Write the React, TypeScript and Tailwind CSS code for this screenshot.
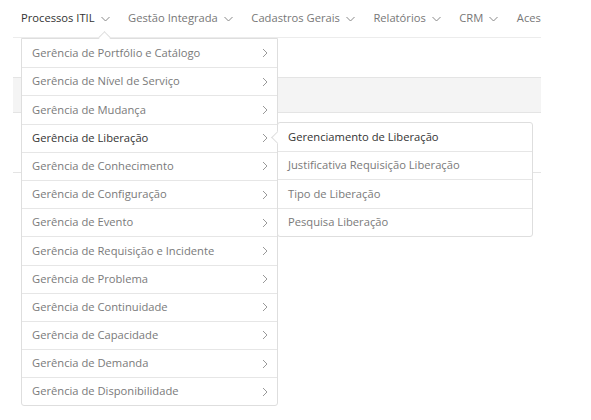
import React from "react";

const mainItems = [
  "Gerência de Portfólio e Catálogo",
  "Gerência de Nível de Serviço",
  "Gerência de Mudança",
  "Gerência de Liberação",
  "Gerência de Conhecimento",
  "Gerência de Configuração",
  "Gerência de Evento",
  "Gerência de Requisição e Incidente",
  "Gerência de Problema",
  "Gerência de Continuidade",
  "Gerência de Capacidade",
  "Gerência de Demanda",
  "Gerência de Disponibilidade",
];

const subItems = [
  "Gerenciamento de Liberação",
  "Justificativa Requisição Liberação",
  "Tipo de Liberação",
  "Pesquisa Liberação",
];

const navItems = ["Processos ITIL", "Gestão Integrada", "Cadastros Gerais", "Relatórios", "CRM"];

function ChevronDown() {
  return (
    <svg width="9" height="6" viewBox="0 0 9 6" className="ml-[6px] mt-[2px]">
      <polyline points="0.5,1 4.5,5 8.5,1" fill="none" stroke="#888" strokeWidth="1" />
    </svg>
  );
}

function ChevronRight() {
  return (
    <svg width="6" height="10" viewBox="0 0 6 10">
      <polyline points="1,1 5,5 1,9" fill="none" stroke="#999" strokeWidth="1" />
    </svg>
  );
}

export default function App() {
  return (
    <div className="relative w-[591px] h-[420px] overflow-hidden bg-white text-[11.2px] font-['Open_Sans',sans-serif]">
      {/* page behind */}
      <div className="ml-[13px] w-[528px]">
        <nav className="h-[38px] flex items-center pl-[8px] border-b border-[#ececec] whitespace-nowrap overflow-hidden">
          {navItems.map((n, i) => (
            <div key={n} className={`flex items-center mr-[18.5px] ${i === 0 ? "text-[#333]" : "text-[#777]"}`}>
              {n}
              <ChevronDown />
            </div>
          ))}
          <div className="text-[#777]">Acesso</div>
        </nav>
        <div className="h-[39px]" />
        <div className="h-[36px] bg-[#f4f4f4] border-y border-[#e4e4e4]" />
        <div className="h-[60px] border-b border-[#e4e4e4]" />
      </div>

      {/* main dropdown */}
      <div className="absolute left-[21px] top-[38px] w-[257px] bg-white border border-[#dedede] rounded-b-[3px]">
        <div className="absolute left-[78px] -top-[6px] w-[9px] h-[9px] bg-white border-l border-t border-[#dedede] rotate-45" />
        {mainItems.map((t, i) => (
          <div
            key={t}
            className={`relative h-[28.2px] flex items-center justify-between pl-[10px] pr-[9px] ${
              i > 0 ? "border-t border-[#e6e6e6]" : ""
            } ${i === 3 ? "text-[#333]" : "text-[#7a7a7a]"}`}
          >
            <span>{t}</span>
            <ChevronRight />
          </div>
        ))}
      </div>

      {/* submenu */}
      <div className="absolute left-[277px] top-[122px] w-[256px] bg-white border border-[#dedede] rounded-[3px]">
        <div className="absolute -left-[5px] top-[10px] w-[9px] h-[9px] bg-white border-l border-b border-[#dedede] rotate-45" />
        {subItems.map((t, i) => (
          <div
            key={t}
            className={`relative h-[28.2px] flex items-center pl-[10px] ${
              i > 0 ? "border-t border-[#e6e6e6]" : ""
            } ${i === 0 ? "text-[#333]" : "text-[#7a7a7a]"}`}
          >
            {t}
          </div>
        ))}
      </div>
    </div>
  );
}
